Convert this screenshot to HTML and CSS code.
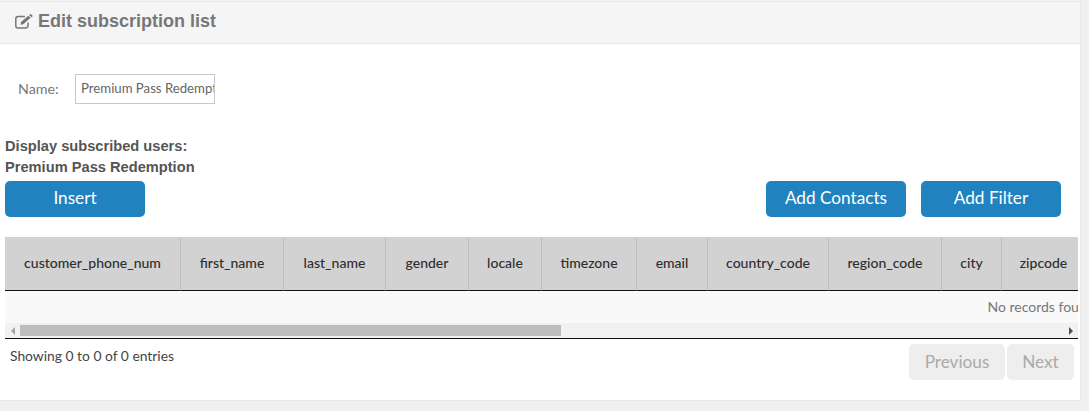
FILE: index.html
```html
<!DOCTYPE html>
<html lang="en">
<head>
    <meta charset="UTF-8">
    <title>Edit subscription list</title>
    <link rel="stylesheet" href="styles.css">
</head>
<body>
<div class="panel">
    <!-- Heading -->
    <div class="panel-heading">
        <svg class="edit-icon" viewBox="0 0 18 15" width="18" height="15" aria-hidden="true">
            <path d="M13 8.500v3.200A2.300 2.300 0 0 1 10.700 14H3A2.300 2.300 0 0 1 .8 11.700V4.800A2.300 2.300 0 0 1 3 2.500H10" fill="none" stroke="currentColor" stroke-width="1.500"/>
            <path d="M6 8 13.300 1.700 15.600 3.800 8.300 10.300 5.500 10.800z" fill="currentColor"/>
            <path d="M14.100 1 15 .3a.8.8 0 0 1 1 0l1.400 1.200a.8.8 0 0 1 0 1l-.9.8z" fill="currentColor"/>
        </svg>
        <h2>Edit subscription list</h2>
    </div>

    <div class="panel-body">
        <div class="name-row">
            <label for="list-name">Name:</label>
            <input id="list-name" type="text" value="Premium Pass Redemption">
        </div>

        <p class="list-title">Display subscribed users:<br>Premium Pass Redemption</p>

        <div class="toolbar">
            <button class="btn">Insert</button>
            <div class="toolbar-right">
                <button class="btn">Add Contacts</button>
                <button class="btn">Add Filter</button>
            </div>
        </div>

        <!-- Table -->
        <div class="table-wrap">
            <div class="table-clip">
                <table>
                    <thead>
                        <tr>
                            <th>customer_phone_num</th>
                            <th>first_name</th>
                            <th>last_name</th>
                            <th>gender</th>
                            <th>locale</th>
                            <th>timezone</th>
                            <th>email</th>
                            <th>country_code</th>
                            <th>region_code</th>
                            <th>city</th>
                            <th>zipcode</th>
                            <th></th>
                        </tr>
                    </thead>
                    <tbody>
                        <tr>
                            <td colspan="12">No records found</td>
                        </tr>
                    </tbody>
                </table>
            </div>
            <div class="scrollbar">
                <span class="arrow arrow-left"></span>
                <div class="track"><div class="thumb"></div></div>
                <span class="arrow arrow-right"></span>
            </div>
        </div>

        <div class="table-footer">
            <div class="info">Showing 0 to 0 of 0 entries</div>
            <div class="pager">
                <button class="page-btn page-prev">Previous</button>
                <button class="page-btn page-next">Next</button>
            </div>
        </div>
    </div>
</div>
</body>
</html>
```

FILE: styles.css
```css
* {
    margin: 0;
    padding: 0;
    box-sizing: border-box;
}
body {
    font-family: 'Lato', sans-serif;
    background-color: #f0f0f0;
    color: #555;
    overflow: hidden;
    height: 411px;
    padding-top: 1px;
}

/* Panel */
.panel {
    width: 1081px;
    height: 400px;
    background-color: #fff;
    border: 1px solid #e7e7e7;
    border-left: none;
}
.panel-heading {
    height: 42px;
    background-color: #f5f5f5;
    border-bottom: 1px solid #e7e7e7;
    display: flex;
    align-items: center;
    padding: 0 0 2px 15px;
    color: #777;
}
.panel-heading h2 {
    font-family: 'Liberation Sans', sans-serif;
    font-size: 18px;
    font-weight: 700;
    margin-left: 5px;
}
.edit-icon {
    flex: none;
}
.panel-body {
    padding: 0 2px 0 5px;
}

/* Name */
.name-row {
    display: flex;
    align-items: center;
    height: 30px;
    margin-top: 30px;
    padding-left: 13px;
    font-size: 14.300px;
}
.name-row label {
    width: 57px;
    padding-bottom: 2px;
    color: #777;
}
.name-row input {
    width: 140px;
    height: 30px;
    border: 1px solid #c8c8c8;
    padding: 0 0 2px 5px;
    font-family: inherit;
    font-size: 13.200px;
    color: #666;
    outline: none;
}

.list-title {
    margin-top: 32px;
    font-family: 'Liberation Sans', sans-serif;
    font-size: 14.650px;
    font-weight: 700;
    line-height: 21px;
    color: #555;
}

/* Buttons */
.toolbar {
    display: flex;
    justify-content: space-between;
    padding-right: 17px;
    margin-top: 3px;
}
.toolbar-right {
    display: flex;
    gap: 15px;
}
.btn {
    width: 140px;
    height: 36px;
    padding-bottom: 3px;
    background-color: #2083c0;
    color: #fff;
    border: none;
    border-radius: 5px;
    font-family: inherit;
    font-size: 17.200px;
}

/* Table */
.table-wrap {
    margin-top: 20px;
    border-bottom: 1px solid #111;
}
.table-clip {
    overflow: hidden;
}
table {
    width: 2072px;
    table-layout: fixed;
    border-collapse: separate;
    border-spacing: 0;
    font-size: 14px;
}
th {
    height: 54px;
    padding-bottom: 3px;
    background-color: #d2d2d2;
    border-right: 1px solid #bdbdbd;
    border-bottom: 1px solid #111;
    color: #2e2e2e;
    font-weight: 500;
}
th:nth-child(1) { width: 176px; }
th:nth-child(2) { width: 103px; }
th:nth-child(3) { width: 102px; }
th:nth-child(4) { width: 83px; }
th:nth-child(5) { width: 73px; }
th:nth-child(6) { width: 95px; }
th:nth-child(7) { width: 71px; }
th:nth-child(8) { width: 121px; }
th:nth-child(9) { width: 113px; }
th:nth-child(10) { width: 60px; }
th:nth-child(11) { width: 84px; }
td {
    height: 32px;
    padding-bottom: 2px;
    background-color: #f9f9f9;
    text-align: center;
    color: #777;
}

/* Scrollbar */
.scrollbar {
    display: flex;
    align-items: center;
    height: 15px;
    background-color: #f1f1f1;
}
.arrow {
    flex: none;
    width: 15px;
    display: flex;
    justify-content: center;
}
.arrow::before {
    content: '';
    border-top: 4px solid transparent;
    border-bottom: 4px solid transparent;
}
.arrow-left::before {
    border-right: 4px solid #a3a3a3;
}
.arrow-right::before {
    border-left: 4px solid #505050;
}
.track {
    flex: 1;
    height: 100%;
}
.thumb {
    width: 541px;
    height: 11px;
    margin-top: 2px;
    background-color: #bdbdbd;
}

/* Footer */
.table-footer {
    display: flex;
    justify-content: space-between;
    padding: 5px 4px 0 5px;
}
.info {
    padding-top: 3px;
    font-size: 13.850px;
    color: #444;
}
.pager {
    display: flex;
    gap: 2px;
}
.page-btn {
    height: 36px;
    padding-bottom: 1px;
    background-color: #eee;
    border: none;
    border-radius: 5px;
    font-family: inherit;
    font-size: 17.200px;
    color: #aaa;
}
.page-prev {
    width: 96px;
}
.page-next {
    width: 67px;
}
```
